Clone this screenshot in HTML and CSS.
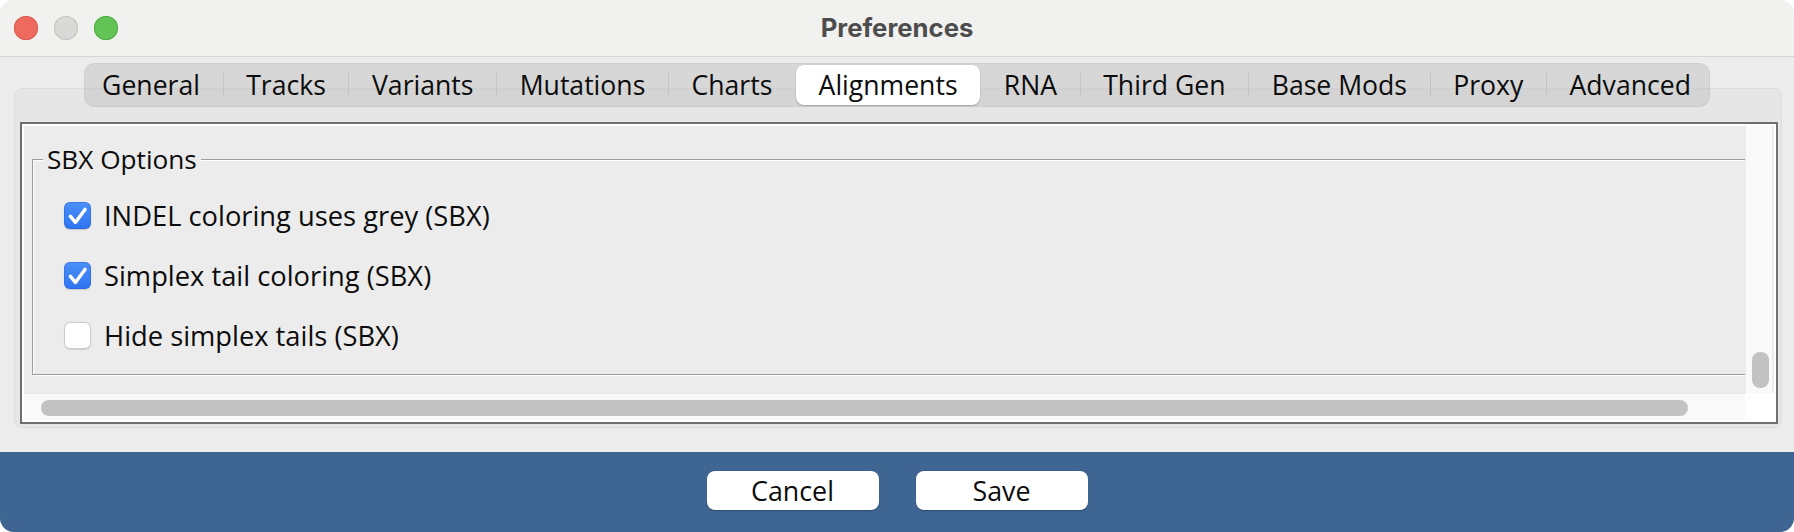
FILE: index.html
```html
<!DOCTYPE html>
<html>
<head>
<meta charset="utf-8">
<title>Preferences</title>
<link rel="stylesheet" href="styles.css">
</head>
<body>
<div class="window">
  <header class="titlebar">
    <div class="lights">
      <span class="light red"></span>
      <span class="light grey"></span>
      <span class="light green"></span>
    </div>
    <div class="title">Preferences</div>
    <div></div>
  </header>

  <main class="content">
    <nav class="tabbar">
      <span class="tab">General</span><span class="sep"></span>
      <span class="tab">Tracks</span><span class="sep"></span>
      <span class="tab">Variants</span><span class="sep"></span>
      <span class="tab">Mutations</span><span class="sep"></span>
      <span class="tab">Charts</span><span class="sep hidden"></span>
      <span class="tab selected">Alignments</span><span class="sep hidden"></span>
      <span class="tab">RNA</span><span class="sep"></span>
      <span class="tab">Third Gen</span><span class="sep"></span>
      <span class="tab">Base Mods</span><span class="sep"></span>
      <span class="tab">Proxy</span><span class="sep"></span>
      <span class="tab">Advanced</span>
    </nav>

    <section class="panel">
      <div class="scrollpane">
        <div class="viewport">
          <fieldset class="group">
            <legend>SBX Options</legend>
            <label class="row">
              <span class="check on"><svg viewBox="0 0 27 27" width="27" height="27"><path d="M6.3 14.2 L11.4 20.4 L21 7.4" fill="none" stroke="#fff" stroke-width="3.4" stroke-linecap="round" stroke-linejoin="round"/></svg></span>
              <span class="label">INDEL coloring uses grey (SBX)</span>
            </label>
            <label class="row">
              <span class="check on"><svg viewBox="0 0 27 27" width="27" height="27"><path d="M6.3 14.2 L11.4 20.4 L21 7.4" fill="none" stroke="#fff" stroke-width="3.4" stroke-linecap="round" stroke-linejoin="round"/></svg></span>
              <span class="label">Simplex tail coloring (SBX)</span>
            </label>
            <label class="row">
              <span class="check"></span>
              <span class="label">Hide simplex tails (SBX)</span>
            </label>
          </fieldset>
        </div>
        <div class="vtrack"><span class="vthumb"></span></div>
        <div class="htrack"><span class="hthumb"></span></div>
        <div class="corner"></div>
      </div>
    </section>
  </main>

  <footer class="footer">
    <button class="btn">Cancel</button>
    <button class="btn">Save</button>
  </footer>
</div>
</body>
</html>
```

FILE: styles.css
```css
* { box-sizing: border-box; }

html, body {
  margin: 0;
  padding: 0;
  background: #ffffff;
}

body {
  font-family: "Open Sans", "Liberation Sans", sans-serif;
  color: #0c0c0c;
}

.window {
  width: 1794px;
  height: 532px;
  border-radius: 14px;
  overflow: hidden;
  background: #ececec;
  display: flex;
  flex-direction: column;
}

/* ---------- title bar ---------- */
.titlebar {
  height: 57px;
  flex: none;
  background: #f1f1f0;
  border-bottom: 1px solid #d6d6d6;
  display: grid;
  grid-template-columns: 1fr auto 1fr;
  align-items: center;
}

.lights {
  display: flex;
  gap: 16px;
  padding-left: 14px;
}

.light {
  width: 24px;
  height: 24px;
  border-radius: 50%;
  display: block;
}
.light.red { background: #ee6a5f; box-shadow: inset 0 0 0 1px #d85b50; }
.light.grey { background: #d9d9d8; box-shadow: inset 0 0 0 1px #c4c4c3; }
.light.green { background: #61c454; box-shadow: inset 0 0 0 1px #50a944; }

.title {
  font-family: "Inter", "Open Sans", sans-serif;
  font-weight: 700;
  font-size: 25.7px;
  color: #4d4d4d;
  padding-bottom: 2px;
}

/* ---------- main ---------- */
.content {
  flex: none;
  display: flex;
  flex-direction: column;
  padding-top: 6px;
}

.tabbar {
  align-self: center;
  position: relative;
  z-index: 1;
  display: flex;
  align-items: center;
  height: 44px;
  padding: 2px 0;
  margin-bottom: -19px;
  border-radius: 11px;
  background: rgba(190, 190, 190, 0.45);
  box-shadow: inset 0 0 0 1px rgba(0, 0, 0, 0.035);
}

.tab {
  height: 40px;
  display: flex;
  align-items: center;
  padding: 0 22.6px;
  font-size: 26.6px;
  color: #0c0c0c;
  border-radius: 8px;
  white-space: nowrap;
}
.tab:first-child { padding-left: 18px; }
.tab:last-child { padding-right: 19px; }

.tab.selected {
  background: #ffffff;
  box-shadow: 0 1px 1.5px rgba(0, 0, 0, 0.22), 0 0 0 0.5px rgba(0, 0, 0, 0.06);
}

.sep {
  width: 1px;
  height: 24px;
  background: #c4c4c4;
  flex: none;
}
.sep.hidden { background: transparent; }

.panel {
  height: 340px;
  margin: 0 12px 0 14px;
  border: 1px solid #dcdcdc;
  border-radius: 8px;
  background: #e6e6e6;
  padding: 33px 3px 3px 5px;
}

.scrollpane {
  height: 302px;
  border: 2px solid #6f6f6f;
  padding: 2px;
  background: #ffffff;
  display: grid;
  grid-template-columns: 1fr 29px;
  grid-template-rows: 267px 27px;
}

.viewport {
  background: #ececec;
  overflow: hidden;
  padding: 18px 0 0 8px;
}

.group {
  margin: 0;
  width: calc(100% + 60px);
  border: 1px solid #9b9b9b;
  box-shadow: 1px 1px 0 #ffffff, inset 1px 1px 0 #ffffff;
  padding: 11px 0 9px 31px;
  min-width: 0;
}

.group legend {
  font-size: 26.2px;
  line-height: 30px;
  padding: 0 4px;
  margin-left: -21px;
  background: #ececec;
  color: #0c0c0c;
}

.row {
  height: 60px;
  display: flex;
  align-items: center;
  gap: 13px;
}

.check {
  width: 27px;
  height: 27px;
  flex: none;
  border-radius: 6px;
  background: #ffffff;
  box-shadow: inset 0 0 0 1px #cbcbcb, 0 0.5px 1px rgba(0, 0, 0, 0.12);
  display: flex;
}

.check.on {
  background: linear-gradient(#4b8ff9, #2f74f1);
  box-shadow: inset 0 0 0 1px rgba(30, 90, 210, 0.35), 0 0.5px 1px rgba(0, 0, 0, 0.15);
}

.label {
  font-size: 27.3px;
  color: #0c0c0c;
  white-space: nowrap;
}

.vtrack {
  background: #f9f9f9;
  border-left: 1px solid #e9e9e9;
  border-right: 2px solid #ececec;
  display: flex;
  flex-direction: column;
  justify-content: flex-end;
  padding: 0 3px 5px 6px;
}

.vthumb {
  display: block;
  height: 36px;
  border-radius: 8px;
  background: #c2c2c2;
}

.htrack {
  background: #f9f9f9;
  border-top: 1px solid #e6e6e6;
  padding: 6px 57px 0 17px;
}

.hthumb {
  display: block;
  height: 16px;
  border-radius: 8px;
  background: #c2c2c2;
}

.corner { background: #ffffff; }

/* ---------- footer ---------- */
.footer {
  margin-top: 24px;
  flex: 1;
  background: #3f6592;
  display: flex;
  justify-content: center;
  align-items: flex-start;
  gap: 37px;
  padding-top: 19px;
}

.btn {
  width: 172px;
  height: 39px;
  border: none;
  border-radius: 8px;
  background: #ffffff;
  font-family: "Open Sans", "Liberation Sans", sans-serif;
  font-size: 26.8px;
  color: #0c0c0c;
  padding: 0;
  line-height: 39px;
  box-shadow: 0 0.5px 1px rgba(0, 0, 0, 0.25);
}
```
